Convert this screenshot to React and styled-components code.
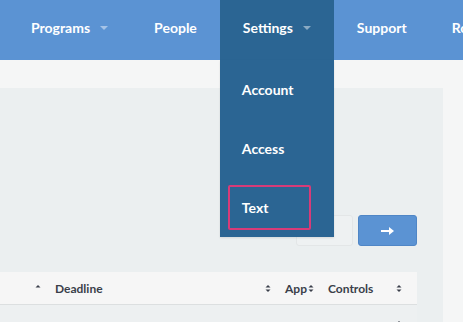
import React from "react";
import styled, { createGlobalStyle } from "styled-components";

const GlobalStyle = createGlobalStyle`
  body {
    margin: 0;
    background: #f5f6f6;
    font-family: "Lato", "Open Sans", sans-serif;
    overflow: hidden;
  }
`;

const Page = styled.div`
  width: 463px;
  height: 322px;
  overflow: hidden;
  background: #f5f6f6;
`;

const NavBar = styled.nav`
  display: flex;
  height: 60px;
  padding-left: 8px;
  background: #5b93d3;
  position: relative;
  z-index: 2;
`;

const NavItem = styled.div`
  position: relative;
  display: flex;
  align-items: center;
  flex-shrink: 0;
  padding: 0 ${(p) => (p.$tight ? "22px" : "23px")} 6px 23px;
  color: #fff;
  font-size: 14px;
  font-weight: 700;
  background: ${(p) => (p.$active ? "#2b6593" : "transparent")};
`;

const Caret = styled.span`
  display: inline-block;
  margin-left: 10px;
  margin-top: 1px;
  border-left: 4px solid transparent;
  border-right: 4px solid transparent;
  border-top: 4px solid rgba(255, 255, 255, 0.45);
`;

const Dropdown = styled.ul`
  position: absolute;
  top: 60px;
  left: 0;
  right: 0;
  margin: 0;
  padding: 0;
  list-style: none;
  background: #2b6593;
  box-shadow: 0 1px 2px rgba(0, 0, 0, 0.1);
`;

const DropItem = styled.li`
  height: 59px;
  display: flex;
  align-items: center;
  padding: 0 8px;
`;

const DropLink = styled.span`
  display: flex;
  align-items: center;
  width: 83px;
  height: 45px;
  box-sizing: border-box;
  padding: 0 0 1px 12px;
  border: 2px solid ${(p) => (p.$focused ? "#d83b78" : "transparent")};
  border-radius: 2px;
  color: #fff;
  font-size: 14px;
  font-weight: 700;
`;

const Main = styled.main`
  padding: 28px 20px 0 0;
`;

const Panel = styled.section`
  background: #ebeff0;
  padding: 127px 26px 0 0;
  height: 240px;
`;

const FormRow = styled.div`
  display: flex;
  justify-content: flex-end;
  gap: 5px;
`;

const Input = styled.div`
  width: 57px;
  height: 31px;
  box-sizing: border-box;
  border: 1px solid #e3e6e7;
  border-radius: 3px;
  background: #eef1f2;
`;

const GoButton = styled.button`
  width: 59px;
  height: 31px;
  border: 1px solid #4f86c6;
  border-radius: 3px;
  background: #5b93d3;
  color: #fff;
  display: flex;
  align-items: center;
  justify-content: center;
  padding: 0;
`;

const Table = styled.div`
  margin-top: 26px;
`;

const HeadRow = styled.div`
  display: grid;
  grid-template-columns: 45px 230px 43px 88px;
  height: 32px;
  align-items: center;
  background: #f6f6f6;
  border-bottom: 1px solid #dcdfe0;
  font-size: 12px;
  font-weight: 700;
  color: #3a3f4a;
`;

const HeadCell = styled.div`
  display: flex;
  align-items: center;
  justify-content: ${(p) => (p.$end ? "flex-end" : "space-between")};
  padding: 0 4px 0 10px;
`;

const BodyRow = styled.div`
  display: grid;
  grid-template-columns: 45px 230px 43px 88px;
  height: 24px;
  background: #edf0f1;
`;

const BodyCell = styled.div`
  display: flex;
  align-items: flex-end;
  justify-content: flex-end;
  padding: 0 4px;
`;

const SortIcon = ({ up = true, down = true }) => (
  <svg width="6" height="9" viewBox="0 0 6 9">
    {up && <path d="M0.5 3.5 L3 1 L5.5 3.5 Z" fill="#3a3f4a" />}
    {down && <path d="M0.5 5.5 L3 8 L5.5 5.5 Z" fill="#3a3f4a" />}
  </svg>
);

const Arrow = () => (
  <svg width="14" height="10" viewBox="0 0 14 10">
    <path d="M0 5 H10" stroke="#fff" strokeWidth="2" />
    <path d="M8 1 L13 5 L8 9 Z" fill="#fff" />
  </svg>
);

const App = () => {
  return (
    <Page>
      <GlobalStyle />
      <NavBar>
        <NavItem>
          Programs
          <Caret />
        </NavItem>
        <NavItem>People</NavItem>
        <NavItem $active>
          Settings
          <Caret />
          <Dropdown>
            <DropItem>
              <DropLink>Account</DropLink>
            </DropItem>
            <DropItem>
              <DropLink>Access</DropLink>
            </DropItem>
            <DropItem>
              <DropLink $focused>Text</DropLink>
            </DropItem>
          </Dropdown>
        </NavItem>
        <NavItem $tight>Support</NavItem>
        <NavItem>Ro</NavItem>
      </NavBar>
      <Main>
        <Panel>
          <FormRow>
            <Input />
            <GoButton>
              <Arrow />
            </GoButton>
          </FormRow>
          <Table>
            <HeadRow>
              <HeadCell $end>
                <SortIcon down={false} />
              </HeadCell>
              <HeadCell>
                Deadline
                <SortIcon />
              </HeadCell>
              <HeadCell>
                App
                <SortIcon />
              </HeadCell>
              <HeadCell>
                Controls
                <SortIcon />
              </HeadCell>
            </HeadRow>
            <BodyRow>
              <BodyCell />
              <BodyCell />
              <BodyCell />
              <BodyCell>
                <SortIcon down={false} />
              </BodyCell>
            </BodyRow>
          </Table>
        </Panel>
      </Main>
    </Page>
  );
};

export default App;
